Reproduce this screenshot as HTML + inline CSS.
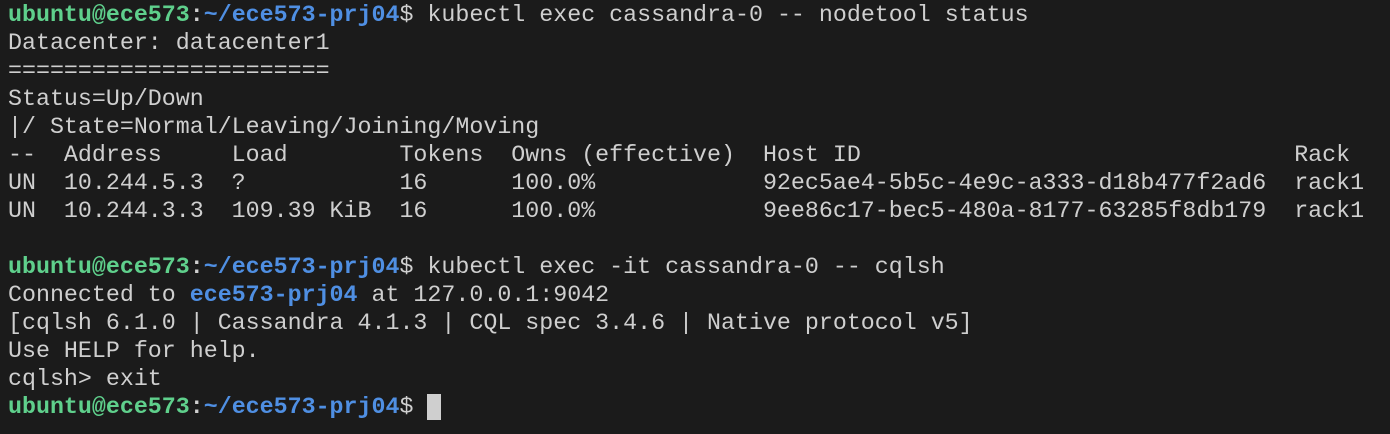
<!DOCTYPE html>
<html><head><style>
body{margin:0;background:#1b1b1b;width:1390px;height:434px;overflow:hidden}
pre{margin:0;padding:1px 0 0 8px;font-family:"Liberation Mono",monospace;font-size:23.3px;line-height:28px;color:#cfcfcf;position:relative;top:0}
.g{color:#5fd08c;font-weight:bold}.b{color:#4f8fe3;font-weight:bold}.w{font-weight:bold}
.c{background:#cfcfcf;color:#cfcfcf}
</style></head><body><pre><span class="g">ubuntu@ece573</span><span class="w">:</span><span class="b">~/ece573-prj04</span>$ kubectl exec cassandra-0 -- nodetool status
Datacenter: datacenter1
=======================
Status=Up/Down
|/ State=Normal/Leaving/Joining/Moving
--  Address     Load        Tokens  Owns (effective)  Host ID                               Rack
UN  10.244.5.3  ?           16      100.0%            92ec5ae4-5b5c-4e9c-a333-d18b477f2ad6  rack1
UN  10.244.3.3  109.39 KiB  16      100.0%            9ee86c17-bec5-480a-8177-63285f8db179  rack1

<span class="g">ubuntu@ece573</span><span class="w">:</span><span class="b">~/ece573-prj04</span>$ kubectl exec -it cassandra-0 -- cqlsh
Connected to <span class="b">ece573-prj04</span> at 127.0.0.1:9042
[cqlsh 6.1.0 | Cassandra 4.1.3 | CQL spec 3.4.6 | Native protocol v5]
Use HELP for help.
cqlsh&gt; exit
<span class="g">ubuntu@ece573</span><span class="w">:</span><span class="b">~/ece573-prj04</span>$ <span class="c">&#160;</span></pre></body></html>
